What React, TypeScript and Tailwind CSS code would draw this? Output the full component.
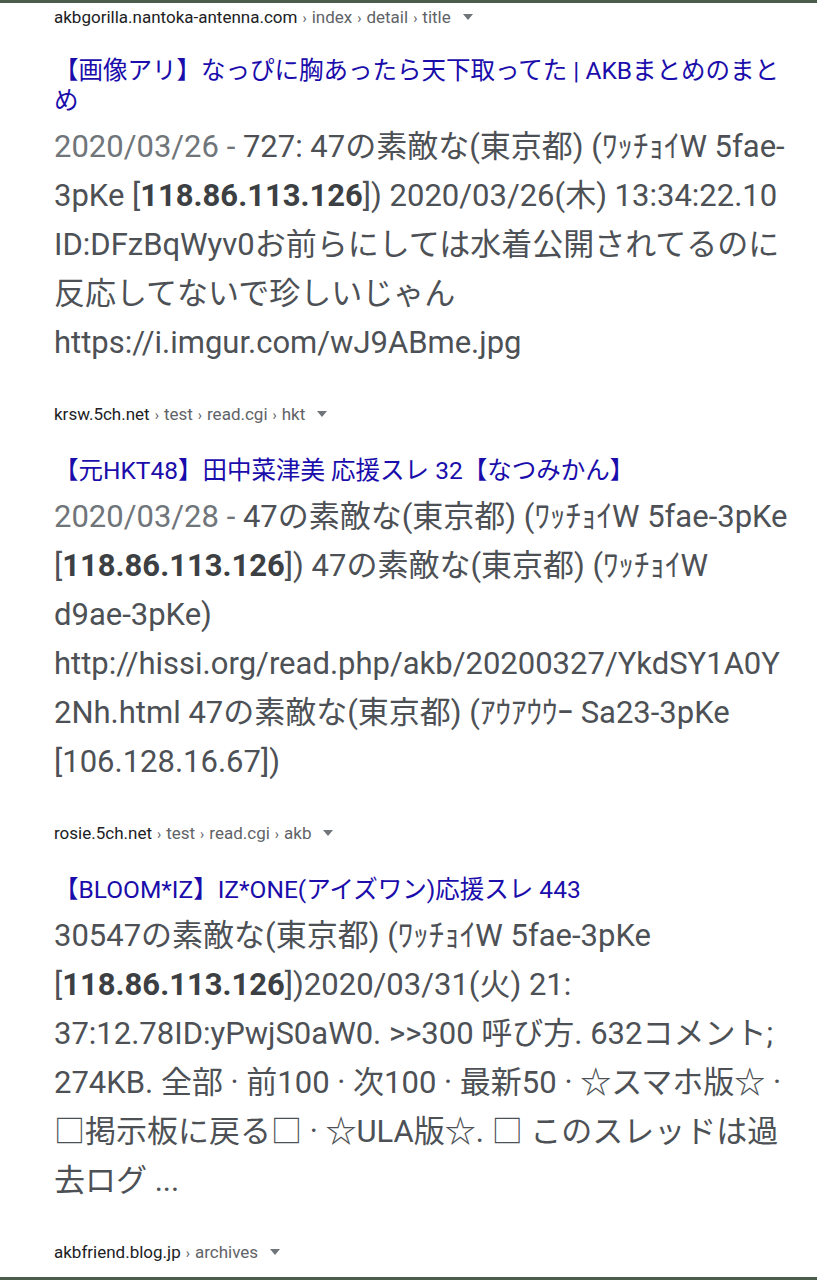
import React from "react"

const latin = { fontFamily: 'Roboto, "Noto Sans CJK JP", sans-serif' }

function UrlLine({ domain, path }: { domain: string; path: string[] }) {
  return (
    <div className="h-[28px] flex items-center text-[17px] leading-[28px]">
      <span className="text-[#202124]">{domain}</span>
      {path.map((p) => (
        <span key={p} className="text-[#5f6368]">
          <span className="mx-[5px] text-[14px]">›</span>
          {p}
        </span>
      ))}
      <svg className="ml-[12px]" width="10" height="6" viewBox="0 0 10 6">
        <path d="M0 0h10L5 6z" fill="#70757a" />
      </svg>
    </div>
  )
}

function Result({ first, domain, path, title, children }: { first?: boolean; domain: string; path: string[]; title: React.ReactNode; children: React.ReactNode }) {
  return (
    <div className="pb-[33px]">
      <UrlLine domain={domain} path={path} />
      <div className={(first ? "mt-[25px]" : "mt-[28px]") + " text-[24.5px] leading-[30px] text-[#1a0dab]"}>{title}</div>
      <div className="mt-[6px] text-[31px] leading-[49px] text-[#4d5156] whitespace-nowrap">{children}</div>
    </div>
  )
}

const Ip = () => <b className="font-bold text-[#3c4043]">118.86.113.126</b>

export default function App() {
  return (
    <div className="h-[1280px] flex flex-col bg-white overflow-hidden" style={latin}>
      <div className="h-[3px] bg-[#4a5c4a]" />
      <div className="flex-1 pl-[54px] pr-[20px] overflow-hidden">
        <Result
          first
          domain="akbgorilla.nantoka-antenna.com"
          path={["index", "detail", "title"]}
          title={<>【画像アリ】なっぴに胸あったら天下取ってた | AKBまとめのまとめ</>}
        >
          <span className="text-[#70757a]">2020/03/26 - </span>727: 47の素敵な(東京都) (ﾜｯﾁｮｲW 5fae-<br />
          3pKe [<Ip />]) 2020/03/26(木) 13:34:22.10<br />
          ID:DFzBqWyv0お前らにしては水着公開されてるのに<br />
          反応してないで珍しいじゃん<br />
          https://i.imgur.com/wJ9ABme.jpg
        </Result>

        <Result
          domain="krsw.5ch.net"
          path={["test", "read.cgi", "hkt"]}
          title={<>【元HKT48】田中菜津美 応援スレ 32【なつみかん】</>}
        >
          <span className="text-[#70757a]">2020/03/28 - </span>47の素敵な(東京都) (ﾜｯﾁｮｲW 5fae-3pKe<br />
          [<Ip />]) 47の素敵な(東京都) (ﾜｯﾁｮｲW<br />
          d9ae-3pKe)<br />
          http://hissi.org/read.php/akb/20200327/YkdSY1A0Y<br />
          2Nh.html 47の素敵な(東京都) (ｱｳｱｳｳｰ Sa23-3pKe<br />
          [106.128.16.67])
        </Result>

        <Result
          domain="rosie.5ch.net"
          path={["test", "read.cgi", "akb"]}
          title={<>【BLOOM*IZ】IZ*ONE(アイズワン)応援スレ 443</>}
        >
          30547の素敵な(東京都) (ﾜｯﾁｮｲW 5fae-3pKe<br />
          [<Ip />])2020/03/31(火) 21:<br />
          37:12.78ID:yPwjS0aW0. &gt;&gt;300 呼び方. 632コメント;<br />
          274KB. 全部 · 前100 · 次100 · 最新50 · ☆スマホ版☆ ·<br />
          □掲示板に戻る□ · ☆ULA版☆. □ このスレッドは過<br />
          去ログ ...
        </Result>

        <UrlLine domain="akbfriend.blog.jp" path={["archives"]} />
      </div>
      <div className="h-[3px] bg-[#4a5c4a]" />
    </div>
  )
}
